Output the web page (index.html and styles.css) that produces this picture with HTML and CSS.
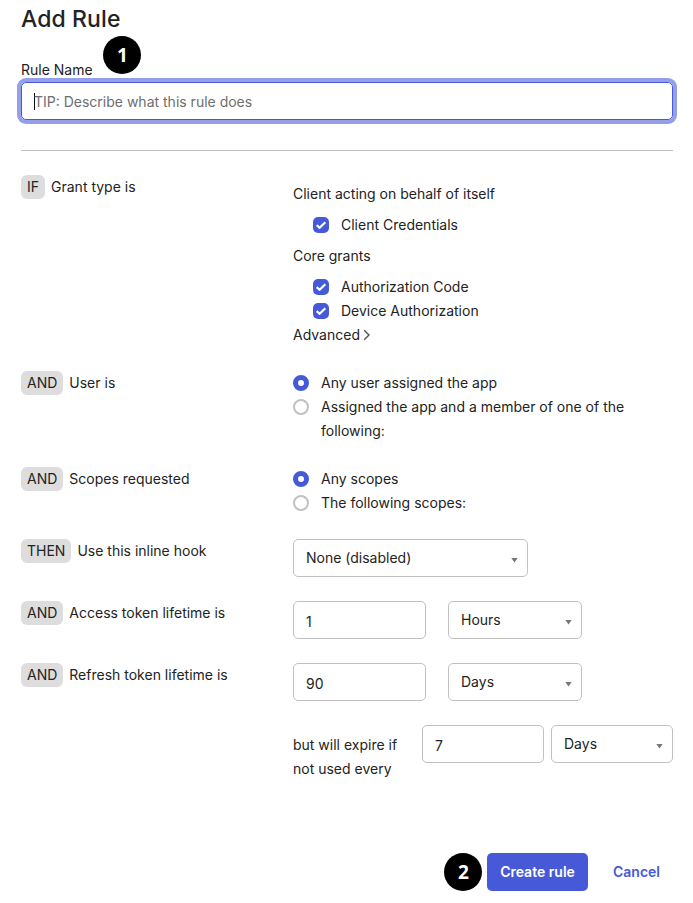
FILE: index.html
```html
<!DOCTYPE html>
<html lang="en">
<head>
<meta charset="utf-8">
<title>Add Rule</title>
<link rel="stylesheet" href="styles.css">
</head>
<body>
<form class="dialog">
  <h1 class="title">Add Rule</h1>
  <div class="name-row">
    <span class="name-label">Rule Name<span class="callout callout-one">1</span></span>
  </div>
  <div class="name-input"><span class="caret"></span><span class="placeholder">TIP: Describe what this rule does</span></div>
  <div class="divider"></div>

  <div class="rules">
    <section class="row">
      <div class="label"><span class="tag">IF</span><span>Grant type is</span></div>
      <div class="grants">
        <div class="group">Client acting on behalf of itself</div>
        <div class="checks">
          <div class="check"><svg class="box" viewBox="0 0 16 16"><rect width="16" height="16" rx="5"/><path d="M3.7 8.1l2.9 2.6 5.7-5.5"/></svg><span>Client Credentials</span></div>
        </div>
        <div class="group">Core grants</div>
        <div class="checks">
          <div class="check"><svg class="box" viewBox="0 0 16 16"><rect width="16" height="16" rx="5"/><path d="M3.7 8.1l2.9 2.6 5.7-5.5"/></svg><span>Authorization Code</span></div>
          <div class="check"><svg class="box" viewBox="0 0 16 16"><rect width="16" height="16" rx="5"/><path d="M3.7 8.1l2.9 2.6 5.7-5.5"/></svg><span>Device Authorization</span></div>
        </div>
        <div class="advanced"><span>Advanced</span><svg class="chevron" viewBox="0 0 8 12"><path d="M1.2 1.2l4.8 4.8-4.8 4.8"/></svg></div>
      </div>
    </section>

    <section class="row">
      <div class="label"><span class="tag">AND</span><span>User is</span></div>
      <div>
        <div class="option"><span class="radio on"></span><span>Any user assigned the app</span></div>
        <div class="option"><span class="radio"></span><span class="option-long">Assigned the app and a member of one of the following:</span></div>
      </div>
    </section>

    <section class="row">
      <div class="label"><span class="tag">AND</span><span>Scopes requested</span></div>
      <div>
        <div class="option"><span class="radio on"></span><span>Any scopes</span></div>
        <div class="option"><span class="radio"></span><span>The following scopes:</span></div>
      </div>
    </section>

    <section class="row">
      <div class="label"><span class="tag">THEN</span><span>Use this inline hook</span></div>
      <div class="fields"><div class="field select hook"><span>None (disabled)</span></div></div>
    </section>

    <section class="row">
      <div class="label"><span class="tag">AND</span><span>Access token lifetime is</span></div>
      <div class="fields"><div class="field number">1</div><div class="field select unit"><span>Hours</span></div></div>
    </section>

    <section class="row">
      <div class="label"><span class="tag">AND</span><span>Refresh token lifetime is</span></div>
      <div class="fields"><div class="field number">90</div><div class="field select unit"><span>Days</span></div></div>
    </section>

    <section class="row">
      <div></div>
      <div class="expiry"><p class="expiry-text">but will expire if<br>not used every</p><div class="field small">7</div><div class="field select small"><span>Days</span></div></div>
    </section>
  </div>

  <div class="actions">
    <span class="callout">2</span>
    <button class="btn primary" type="button">Create rule</button>
    <button class="btn link" type="button">Cancel</button>
  </div>
</form>
</body>
</html>
```
FILE: styles.css
```css
* { box-sizing: border-box; }
body {
  margin: 0;
  background: #fff;
  color: #232323;
  font: 400 14px/24px Inter, "Liberation Sans", sans-serif;
}
.dialog { width: 652px; margin: 0 0 0 21px; padding-top: 4px; }
.title {
  margin: 0;
  font-size: 23px;
  line-height: 30px;
  font-weight: 500;
  letter-spacing: 0.1px;
}
.name-row { height: 48px; padding-top: 24px; }
.name-label { position: relative; }
.callout {
  flex: none;
  width: 38px;
  height: 38px;
  border-radius: 50%;
  background: #000;
  color: #fff;
  font: 700 19px/38px "Open Sans", sans-serif;
  text-align: center;
}
.callout-one { position: absolute; left: 82.4px; top: -25px; }
.name-input {
  display: flex;
  align-items: center;
  height: 38px;
  padding-left: 12px;
  border: 1px solid #465ad8;
  border-radius: 5px;
  box-shadow: 0 0 0 4px #959eeb;
}
.caret { width: 1px; height: 17px; margin-right: -1px; background: #111; }
.placeholder { color: #6e6e6e; padding-top: 1px; }
.divider { height: 1px; margin-top: 30px; background: #c1c1c1; }
.rules { display: grid; gap: 24px; margin-top: 24px; }
.row { display: grid; grid-template-columns: 272px 380px; }
.label { display: flex; align-items: center; gap: 6px; height: 24px; }
.tag { height: 24px; padding: 0 6px; border-radius: 6px; background: #dddddd; }
.grants { padding-top: 7px; }
.checks { padding: 7px 0 0 20px; }
.checks + .group { margin-top: 7px; }
.check { display: flex; align-items: center; gap: 12px; height: 24px; }
.box { width: 16px; height: 16px; }
.box rect { fill: #465ad8; }
.box path { fill: none; stroke: #fff; stroke-width: 2.1; }
.advanced { display: flex; align-items: center; gap: 3px; }
.chevron { width: 8px; height: 12px; fill: none; stroke: #555; stroke-width: 1.4; }
.option { display: flex; gap: 12px; }
.option-long { width: 320px; }
.radio {
  flex: none;
  width: 16px;
  height: 16px;
  margin-top: 4px;
  border: 2px solid #c1c1c1;
  border-radius: 50%;
}
.radio.on { border: 5px solid #465ad8; }
.fields { display: flex; gap: 22px; }
.field {
  height: 38px;
  padding: 1px 12px 0;
  border: 1px solid #c1c1c1;
  border-radius: 5px;
  line-height: 37px;
}
.select {
  display: flex;
  align-items: center;
  justify-content: space-between;
  padding: 0 9px 0 12px;
  line-height: 36px;
}
.select::after {
  content: "";
  width: 7px;
  height: 5px;
  margin-top: 4px;
  background: #777;
  clip-path: polygon(0 0, 100% 0, 50% 100%);
}
.hook { width: 235px; }
.number { width: 133px; }
.unit { width: 134px; }
.expiry { display: flex; }
.expiry-text { width: 129px; margin: 8px 0 0; }
.small { width: 122px; }
.small + .small { margin-left: 7px; }
.actions { display: flex; justify-content: flex-end; margin-top: 72px; }
.btn {
  height: 38px;
  padding: 0;
  border: 0;
  border-radius: 5px;
  font: inherit;
  font-weight: 600;
}
.primary { width: 101px; margin-left: 4.6px; background: #465ad8; color: #fff; }
.link { width: 73px; margin-left: 12px; background: none; color: #465ad8; }
```
